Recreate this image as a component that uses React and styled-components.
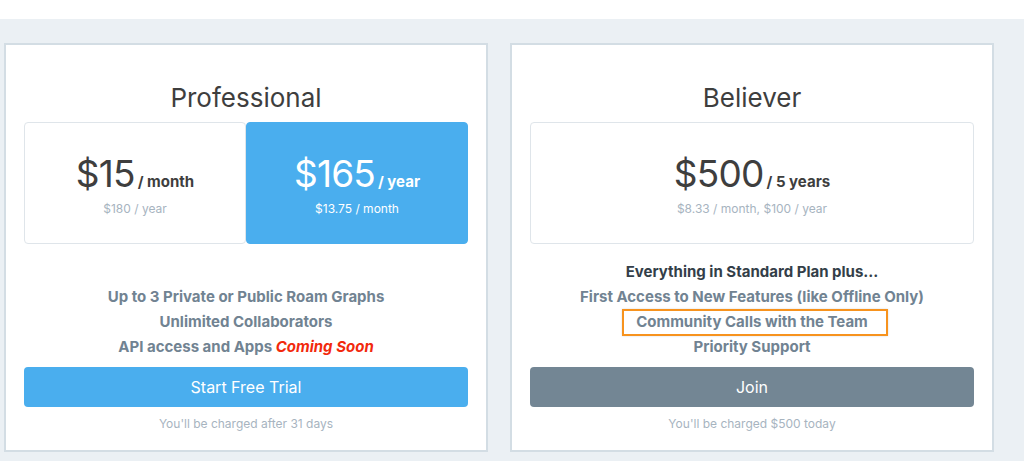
import React from 'react'
import styled, { createGlobalStyle } from 'styled-components'

const GlobalStyle = createGlobalStyle`
  html, body {
    margin: 0;
    padding: 0;
    background: #ffffff;
    font-family: Inter, "Noto Sans", "Liberation Sans", sans-serif;
  }
`

const plans = [
  {
    name: 'Professional',
    prices: [
      { amount: '$15', unit: '/ month', note: '$180 / year' },
      { amount: '$165', unit: '/ year', note: '$13.75 / month', active: true },
    ],
    intro: null,
    features: [
      { text: 'Up to 3 Private or Public Roam Graphs' },
      { text: 'Unlimited Collaborators' },
      { text: 'API access and Apps ', soon: 'Coming Soon' },
    ],
    action: 'Start Free Trial',
    primary: true,
    footnote: "You'll be charged after 31 days",
  },
  {
    name: 'Believer',
    prices: [{ amount: '$500', unit: '/ 5 years', note: '$8.33 / month, $100 / year' }],
    intro: 'Everything in Standard Plan plus...',
    features: [
      { text: 'First Access to New Features (like Offline Only)' },
      { text: 'Community Calls with the Team', marked: true },
      { text: 'Priority Support' },
    ],
    action: 'Join',
    primary: false,
    footnote: "You'll be charged $500 today",
  },
]

export default function App() {
  return (
    <>
      <GlobalStyle />
      <TopBar />
      <Plans>
        {plans.map((plan) => (
          <Card key={plan.name}>
            <Title>{plan.name}</Title>
            <PriceRow $count={plan.prices.length}>
              {plan.prices.map((p) => (
                <PriceBox key={p.amount} $active={p.active}>
                  <PriceLine>
                    <Amount>{p.amount}</Amount>
                    <Unit>{p.unit}</Unit>
                  </PriceLine>
                  <PriceNote $active={p.active}>{p.note}</PriceNote>
                </PriceBox>
              ))}
            </PriceRow>
            <Features>
              {plan.intro && <Intro>{plan.intro}</Intro>}
              {plan.features.map((f) => (
                <Feature key={f.text}>
                  {f.marked ? <Marked>{f.text}</Marked> : f.text}
                  {f.soon && <Soon>{f.soon}</Soon>}
                </Feature>
              ))}
            </Features>
            <ActionButton $primary={plan.primary}>{plan.action}</ActionButton>
            <Footnote>{plan.footnote}</Footnote>
          </Card>
        ))}
      </Plans>
    </>
  )
}

const TopBar = styled.div`
  height: 19px;
  background: #ffffff;
`

const Plans = styled.div`
  display: flex;
  align-items: flex-start;
  gap: 22px;
  height: 442px;
  box-sizing: border-box;
  padding: 24px 0 0 4px;
  background: #ebf0f4;
`

const Card = styled.div`
  width: 484px;
  height: 409px;
  box-sizing: border-box;
  display: flex;
  flex-direction: column;
  padding: 37px 18px 17px;
  background: #ffffff;
  border: 2px solid #d3dde4;
`

const Title = styled.h2`
  margin: 0 0 9px;
  font-size: 26px;
  line-height: 31px;
  font-weight: 400;
  color: #3e3e3e;
  text-align: center;
`

const PriceRow = styled.div`
  display: grid;
  grid-template-columns: repeat(${(p) => p.$count}, 1fr);
`

const PriceBox = styled.div`
  height: 122px;
  box-sizing: border-box;
  display: flex;
  flex-direction: column;
  align-items: center;
  padding-top: 31px;
  border-radius: 4px;
  border: 1px solid ${(p) => (p.$active ? '#4aaeee' : '#dfe5ea')};
  background: ${(p) => (p.$active ? '#4aaeee' : '#ffffff')};
  color: ${(p) => (p.$active ? '#ffffff' : '#3e3e3e')};
`

const PriceLine = styled.div`
  display: flex;
  align-items: baseline;
  height: 40px;
  line-height: 40px;
`

const Amount = styled.span`
  font-size: 37px;
  font-weight: 400;
  letter-spacing: -0.8px;
`

const Unit = styled.span`
  margin-left: 3px;
  font-size: 15px;
  font-weight: 700;
`

const PriceNote = styled.div`
  font-size: 12px;
  line-height: 18px;
  margin-top: 6px;
  color: ${(p) => (p.$active ? '#ffffff' : '#a7b4bf')};
`

const Features = styled.div`
  flex: 1;
  display: flex;
  flex-direction: column;
  justify-content: flex-end;
  text-align: center;
  font-size: 15px;
  font-weight: 700;
  line-height: 25px;
  color: #718392;
`

const Intro = styled.div`
  color: #333e48;
`

const Feature = styled.div``

const Soon = styled.span`
  color: #f2290c;
  font-style: italic;
  font-weight: 700;
`

const Marked = styled.span`
  position: relative;
  &::after {
    content: '';
    position: absolute;
    left: -14px;
    right: -20px;
    top: -3px;
    bottom: -5px;
    border: 2px solid #f7931e;
    box-shadow: 0 0 2px rgba(0, 0, 0, 0.15);
  }
`

const ActionButton = styled.button`
  margin-top: 8px;
  height: 40px;
  flex-shrink: 0;
  border: none;
  border-radius: 4px;
  font-family: inherit;
  font-size: 16px;
  color: #ffffff;
  background: ${(p) => (p.$primary ? '#4aaeee' : '#738694')};
  cursor: pointer;
`

const Footnote = styled.div`
  margin-top: 8px;
  font-size: 12px;
  line-height: 18px;
  color: #a7b4bf;
  text-align: center;
`
